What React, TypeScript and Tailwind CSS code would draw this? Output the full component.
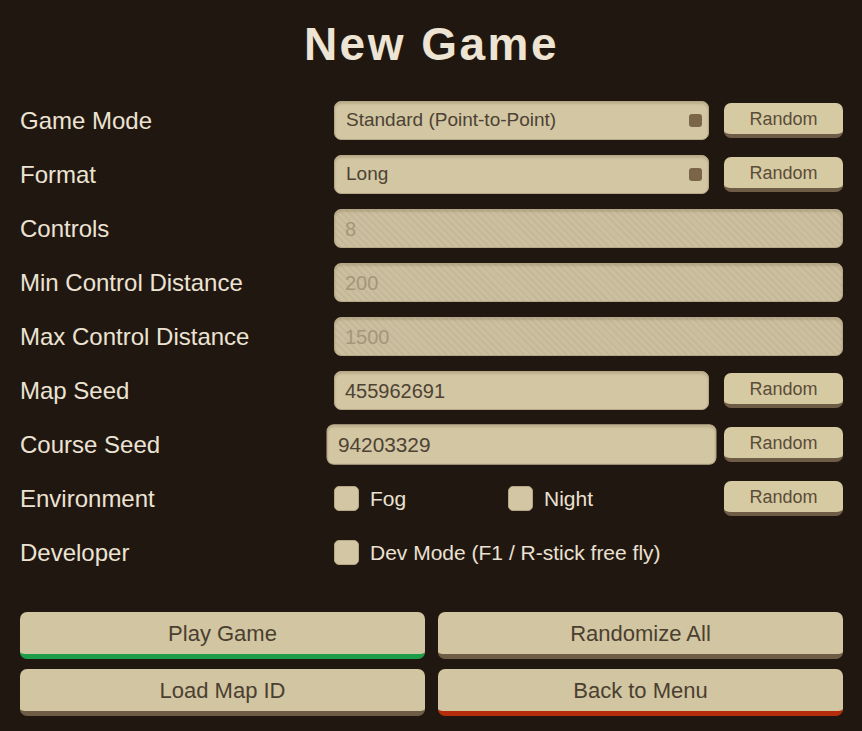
import React from "react";

const field =
  "h-[39px] rounded-[7px] border border-[#b5a785] shadow-[inset_0_2px_2px_rgba(90,70,40,0.18)] flex items-center";

function RandomButton() {
  return (
    <button className="h-[35px] w-[119px] shrink-0 rounded-[7px] border-b-[4px] border-[#6e5c46] bg-[#d6caa2] text-[18px] leading-none text-[#5a4c39]">
      Random
    </button>
  );
}

function Select({ value }: { value: string }) {
  return (
    <div className={`${field} w-[375px] bg-[#d2c6a3] pl-[11px] pr-[6px]`}>
      <span className="flex-1 text-[19px] text-[#4d4233]">{value}</span>
      <span className="h-[13px] w-[13px] rounded-[3px] bg-[#7a6549]" />
    </div>
  );
}

function Disabled({ value }: { value: string }) {
  return (
    <div
      className={`${field} w-full bg-[repeating-linear-gradient(45deg,#cbbf9f_0px,#cbbf9f_3px,#c5b898_3px,#c5b898_5px)] pl-[10px] text-[20px] text-[#a3977a]`}
    >
      {value}
    </div>
  );
}

function TextInput({ value, active }: { value: string; active?: boolean }) {
  return (
    <div
      className={`${field} w-[375px] bg-[#d2c6a3] pl-[10px] text-[20px] text-[#4d4233] ${
        active ? "scale-[1.04] shadow-[0_1px_3px_rgba(0,0,0,0.4)]" : ""
      }`}
    >
      {value}
    </div>
  );
}

function Check({ label }: { label: string }) {
  return (
    <div className="flex items-center gap-[11px]">
      <span className="h-[25px] w-[25px] rounded-[5px] border border-[#b5a785] bg-[#d2c6a4]" />
      <span className="text-[21px] text-[#ebe1d1]">{label}</span>
    </div>
  );
}

function Row({ label, children }: { label: string; children: React.ReactNode }) {
  return (
    <div className="flex h-[39px] items-center">
      <div className="w-[314px] text-[24px] text-[#ece3d3]">{label}</div>
      <div className="flex flex-1 items-center gap-[15px]">{children}</div>
    </div>
  );
}

function BigButton({ label, bar }: { label: string; bar: string }) {
  return (
    <button
      className={`h-[47px] rounded-[7px] border-b-[5px] bg-[#d2c5a1] text-[22px] text-[#4a3f30] ${bar}`}
    >
      {label}
    </button>
  );
}

export default function App() {
  return (
    <div className="flex h-[731px] w-[862px] flex-col bg-[#211711] pl-5 pr-[19px] font-['Liberation_Sans',Arial,sans-serif]">
      <h1 className="mt-[21px] text-center text-[46px] font-bold leading-[46px] tracking-[2.5px] text-[#ede4d4]">
        New Game
      </h1>

      <div className="mt-[34px] flex flex-col gap-[15px]">
        <Row label="Game Mode">
          <Select value="Standard (Point-to-Point)" />
          <RandomButton />
        </Row>
        <Row label="Format">
          <Select value="Long" />
          <RandomButton />
        </Row>
        <Row label="Controls">
          <Disabled value="8" />
        </Row>
        <Row label="Min Control Distance">
          <Disabled value="200" />
        </Row>
        <Row label="Max Control Distance">
          <Disabled value="1500" />
        </Row>
        <Row label="Map Seed">
          <TextInput value="455962691" />
          <RandomButton />
        </Row>
        <Row label="Course Seed">
          <TextInput value="94203329" active />
          <RandomButton />
        </Row>
        <Row label="Environment">
          <div className="flex w-[375px] items-center">
            <div className="w-[174px]">
              <Check label="Fog" />
            </div>
            <Check label="Night" />
          </div>
          <RandomButton />
        </Row>
        <Row label="Developer">
          <Check label="Dev Mode (F1 / R-stick free fly)" />
        </Row>
      </div>

      <div className="mt-[40px] grid grid-cols-2 gap-x-[13px] gap-y-[10px]">
        <BigButton label="Play Game" bar="border-[#1d9d4a]" />
        <BigButton label="Randomize All" bar="border-[#6e5c46]" />
        <BigButton label="Load Map ID" bar="border-[#6e5c46]" />
        <BigButton label="Back to Menu" bar="border-[#b42c0c]" />
      </div>
    </div>
  );
}
